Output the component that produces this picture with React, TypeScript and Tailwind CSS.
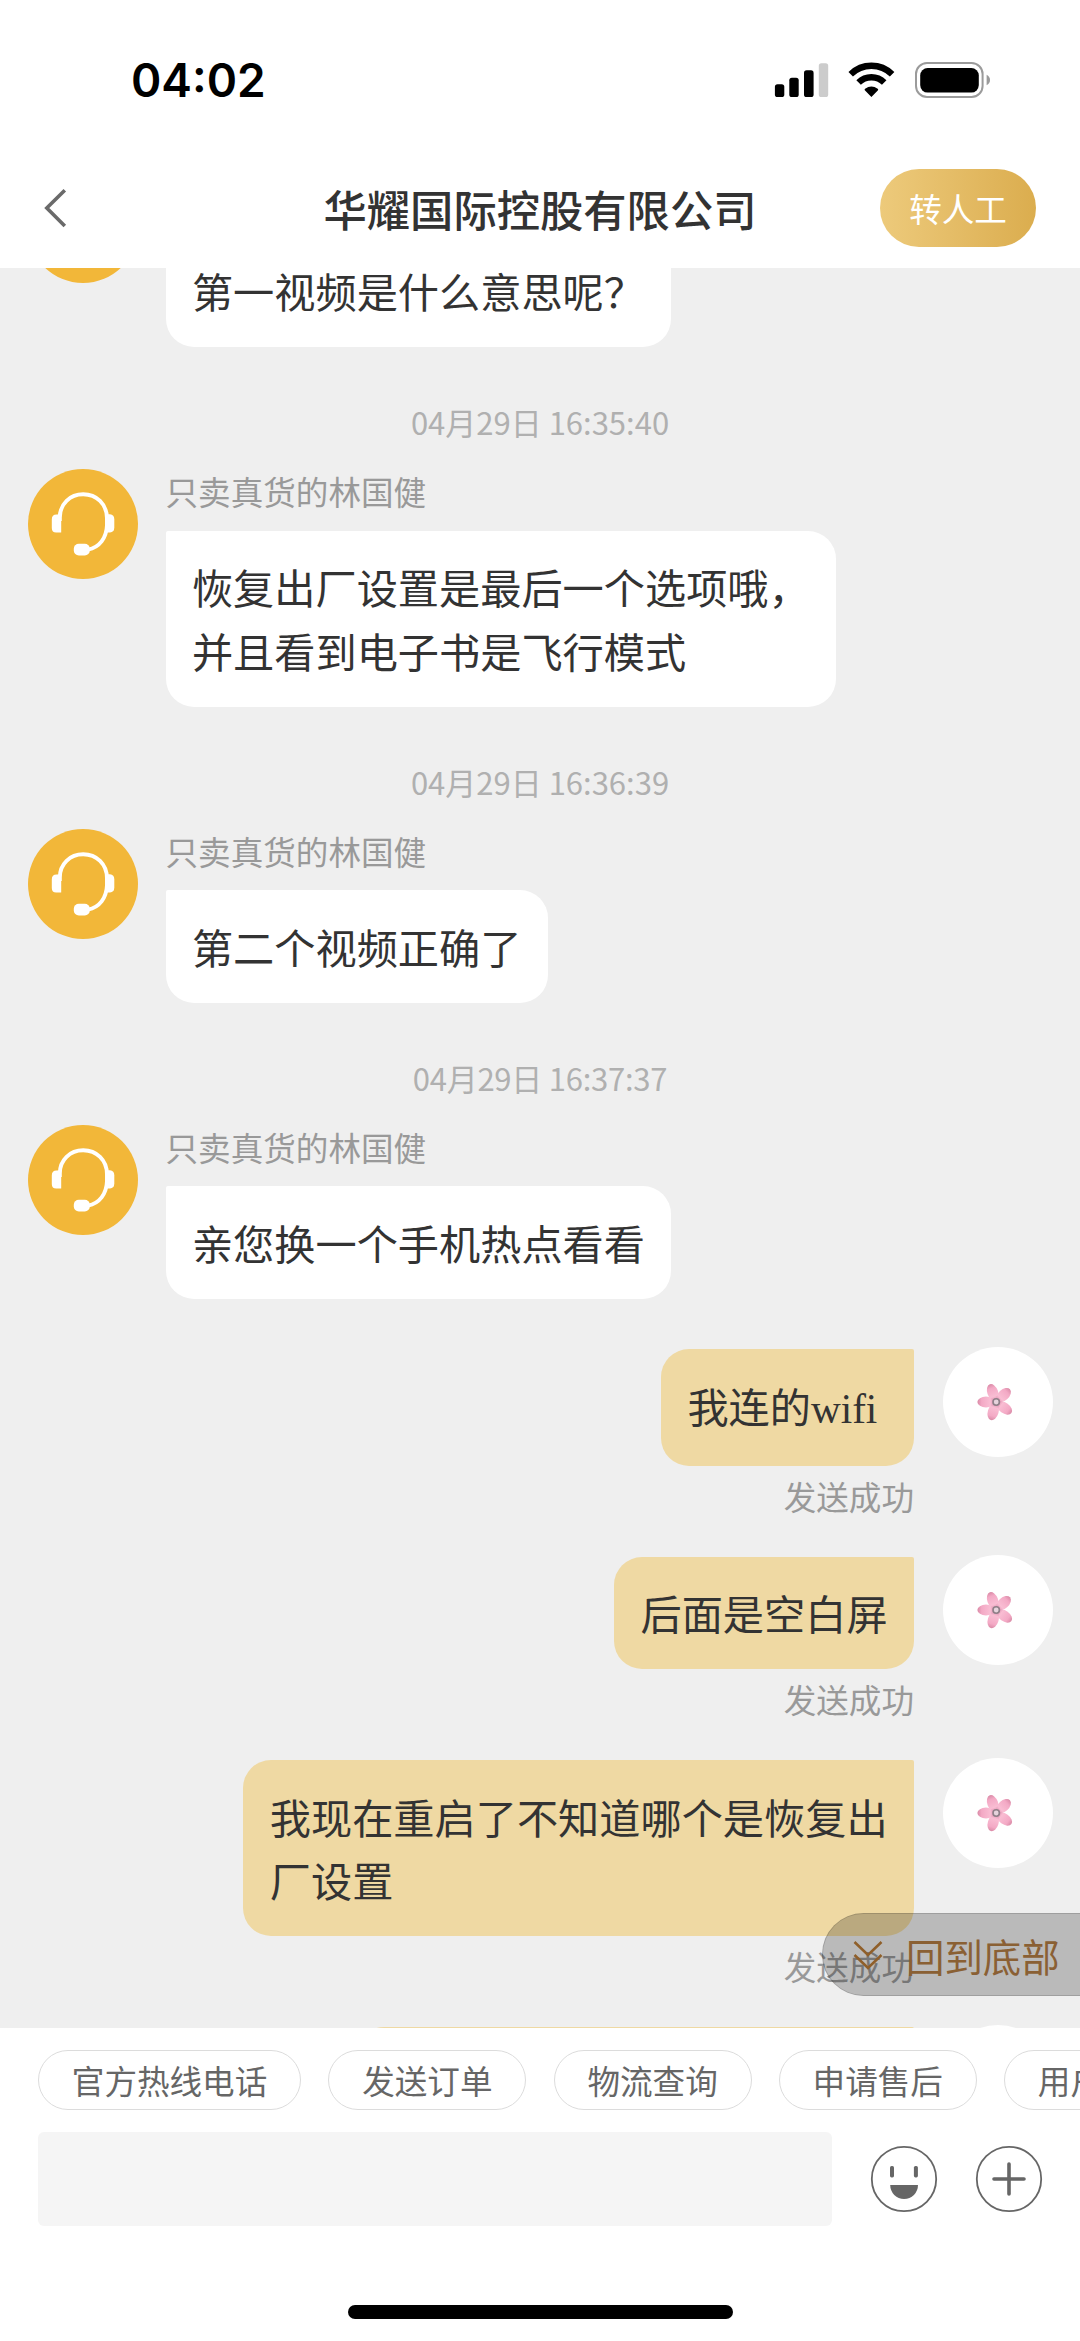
import type { ReactNode } from "react";

type AgentMessage = {
  time?: string;
  timeClass?: string;
  name: string;
  lines: string[];
};

type UserMessage = {
  content: ReactNode;
  bubbleClass?: string;
};

const AGENT_NAME = "只卖真货的林国健";

const agentMessages: AgentMessage[] = [
  { name: AGENT_NAME, lines: ["第一视频是什么意思呢？"] },
  { time: "04月29日 16:35:40", name: AGENT_NAME, lines: ["恢复出厂设置是最后一个选项哦，", "并且看到电子书是飞行模式"] },
  { time: "04月29日 16:36:39", name: AGENT_NAME, lines: ["第二个视频正确了"] },
  { time: "04月29日 16:37:37", timeClass: "tracking-[-0.25px]", name: AGENT_NAME, lines: ["亲您换一个手机热点看看"] },
];

const userMessages: UserMessage[] = [
  {
    content: (
      <>
        我连的<span className="font-['Liberation_Serif',serif]">wifi</span>
      </>
    ),
    bubbleClass: "w-[253px]",
  },
  { content: "后面是空白屏" },
  {
    content: (
      <>
        我现在重启了不知道哪个是恢复出
        <br />
        厂设置
      </>
    ),
  },
  { content: null, bubbleClass: "w-[558px]" },
];

const quickActions = ["官方热线电话", "发送订单", "物流查询", "申请售后", "用户反馈"];

function StatusBar() {
  return (
    <div className="flex h-[148px] items-start justify-between pl-[131px] pr-[89px] pt-[52px]">
      <div className="font-['Inter',sans-serif] text-[46px] font-semibold leading-[56px] text-black">04:02</div>
      <svg width="217" height="36" viewBox="0 0 217 36" className="mt-[10px]">
        <rect x="0.9" y="22.3" width="9.4" height="12.7" rx="2.6" />
        <rect x="15.3" y="15.7" width="9.4" height="19.3" rx="2.6" />
        <rect x="30" y="8.3" width="9.6" height="26.7" rx="2.6" />
        <rect x="44.8" y="1.2" width="9.4" height="33.8" rx="2.6" fill="#cccccc" />
        <g transform="translate(97.4 0)" fill="none" stroke="#000">
          <path d="M-20.7 12.3 A29.5 29.5 0 0 1 20.7 12.3" strokeWidth="6.4" />
          <path d="M-12.8 20.5 A18.2 18.2 0 0 1 12.8 20.5" strokeWidth="6.4" />
          <path d="M0 35 L-6.6 28.2 Q-7.2 27.4 -6.3 26.8 A11 11 0 0 1 6.3 26.8 Q7.2 27.4 6.6 28.2 Z" fill="#000" stroke="none" />
        </g>
        <rect x="142" y="1" width="66.6" height="34" rx="11" fill="none" stroke="#9b9b9b" strokeWidth="2" />
        <rect x="146.2" y="6" width="58.6" height="24.6" rx="7.5" />
        <path d="M212.6 12.8 Q216 14.5 216 18 Q216 21.5 212.6 23.2 Z" fill="#9b9b9b" />
      </svg>
    </div>
  );
}

function Header() {
  return (
    <div className="grid h-[120px] grid-cols-[200px_1fr_200px] items-center">
      <button type="button" className="pl-[43px]">
        <svg width="26" height="44" viewBox="0 0 26 44" fill="none" stroke="#6a6a6a" strokeWidth="3.6">
          <path d="M21.8 4.2 L3.8 22 L21.8 40" />
        </svg>
      </button>
      <div className="text-center text-[43.3px] font-medium leading-[60px] text-[#333333]">华耀国际控股有限公司</div>
      <button
        type="button"
        className="ml-auto mr-[44px] h-[78px] w-[156px] rounded-full bg-linear-to-r from-[#edca7b] to-[#dbad4e] text-[32.6px] leading-[78px] text-white"
      >
        转人工
      </button>
    </div>
  );
}

function AgentAvatar() {
  return (
    <svg width="110" height="110" viewBox="0 0 110 110" className="shrink-0">
      <circle cx="55" cy="55" r="55" fill="#f2b739" />
      <path
        d="M31.8 52 V48.5 C31.8 35 42 25.3 55.2 25.3 S79 35 79 49.5 V56 C78.5 69 71.5 78.5 60 80.6"
        fill="none"
        stroke="#fff"
        strokeWidth="3.9"
      />
      <path d="M33.2 45.3 V63.6 H28.2 Q23.8 63.6 23.8 59 V50.5 Q23.8 45.6 28.5 45.6 Z" fill="#fff" />
      <path d="M77.3 45.3 H82 Q86.3 45.6 86.3 50.5 V58.5 Q86.3 63.2 82 63.4 H77.3 Z" fill="#fff" />
      <rect x="45.8" y="74.8" width="16" height="11.6" rx="5" fill="#fff" />
    </svg>
  );
}

function FlowerAvatar() {
  return (
    <div className="size-[110px] shrink-0 rounded-full bg-white">
      <svg width="110" height="110" viewBox="0 0 110 110">
        <defs>
          <linearGradient id="petal" x1="0" y1="0" x2="0" y2="1">
            <stop offset="0" stopColor="#d98aa6" />
            <stop offset="0.25" stopColor="#f3a9c5" />
            <stop offset="0.75" stopColor="#f9bdd3" />
            <stop offset="1" stopColor="#dc8fae" />
          </linearGradient>
        </defs>
        <g transform="translate(53.2 55)" fill="url(#petal)">
          {[-20, 47, 126, 197, 270].map((deg) => (
            <ellipse key={deg} cx="0" cy="-10.2" rx="5.4" ry="8.6" transform={`rotate(${deg})`} />
          ))}
          <circle r="3.2" fill="#e6d3dc" stroke="#8f7f88" strokeWidth="1.6" />
        </g>
      </svg>
    </div>
  );
}

function AgentRow({ message }: { message: AgentMessage }) {
  return (
    <div>
      {message.time && (
        <div className="flex h-[122px] justify-center pt-[53px]">
          <div className={`h-[44px] text-[31px] leading-[44px] text-[#b0b0b0] ${message.timeClass ?? ""}`}>{message.time}</div>
        </div>
      )}
      <div className="flex items-start gap-[28px] pl-[27.5px]">
        <AgentAvatar />
        <div className="flex flex-col items-start">
          <div className="h-[61.5px] text-[32.6px] leading-[44px] text-[#999999]">{message.name}</div>
          <div className="rounded-[28px] rounded-tl-[2px] bg-white px-[26.4px] py-[24.5px] text-[41.2px] leading-[63.5px] text-[#333333]">
            {message.lines.map((line) => (
              <div key={line} className="whitespace-nowrap">
                {line}
              </div>
            ))}
          </div>
        </div>
      </div>
    </div>
  );
}

function UserRow({ message }: { message: UserMessage }) {
  return (
    <div className="flex items-start justify-end gap-[28.5px] pr-[27.5px]">
      <div className="flex flex-col items-end pt-[2px]">
        <div
          className={`min-h-[112.5px] whitespace-nowrap rounded-[28px] rounded-tr-[2px] bg-[#efd9a3] px-[26.4px] py-[24.5px] text-[41.2px] leading-[63.5px] text-[#333333] ${message.bubbleClass ?? ""}`}
        >
          {message.content}
        </div>
        <div className="h-[89px] pt-[8px] text-[32.6px] leading-[44px] text-[#999999]">发送成功</div>
      </div>
      <FlowerAvatar />
    </div>
  );
}

function BackToBottom() {
  return (
    <button
      type="button"
      className="absolute right-[-2px] top-[1645px] flex h-[83px] w-[260px] items-center rounded-l-full border border-black/15 bg-black/22 pl-[30px] text-[#8a6034]"
    >
      <svg width="30" height="32" viewBox="0 0 30 32" fill="none" stroke="#8f5f2a" strokeWidth="2.6">
        <path d="M1.5 3 L15 16 L28.5 3" />
        <path d="M1.5 16 L15 29 L28.5 16" />
      </svg>
      <span className="ml-[23px] whitespace-nowrap text-[38.4px] leading-[56px]">回到底部</span>
    </button>
  );
}

function Footer() {
  return (
    <div className="h-[313px] bg-white pt-[22px]">
      <div className="flex gap-[27.3px] overflow-hidden pl-[38px]">
        {quickActions.map((label) => (
          <button
            key={label}
            type="button"
            className="h-[60px] shrink-0 whitespace-nowrap rounded-full border border-[#dcdcdc] px-[32.8px] text-[32.6px] leading-[58px] text-[#666666]"
          >
            {label}
          </button>
        ))}
      </div>
      <div className="mt-[22px] flex items-center pl-[38px]">
        <div className="h-[94px] w-[794px] rounded-[6px] bg-[#f5f5f5]" />
        <svg width="68" height="68" viewBox="0 0 68 68" className="ml-[38px]">
          <circle cx="34" cy="34" r="32.2" fill="none" stroke="#666" strokeWidth="1.8" />
          <rect x="20" y="21" width="4" height="11.4" rx="1.6" fill="#666" />
          <rect x="43.9" y="21" width="4" height="11.4" rx="1.6" fill="#666" />
          <path d="M20.2 40 H48 A13.9 14 0 0 1 20.2 40 Z" fill="#666" />
        </svg>
        <svg width="68" height="68" viewBox="0 0 68 68" className="ml-[36.6px]">
          <circle cx="34" cy="34" r="32.2" fill="none" stroke="#666" strokeWidth="1.8" />
          <path d="M19 34 H49 M34 19 V49" stroke="#666" strokeWidth="3.6" strokeLinecap="round" />
        </svg>
      </div>
      <div className="mx-auto mt-[79px] h-[14px] w-[385px] rounded-full bg-black" />
    </div>
  );
}

export default function App() {
  return (
    <div className="flex h-[2341px] w-[1080px] flex-col overflow-hidden bg-white font-['Noto_Sans_CJK_SC',sans-serif]">
      <StatusBar />
      <Header />
      <div className="relative h-[1760px] overflow-hidden bg-[#efefef]">
        <div className="-mt-[95px]">
          {agentMessages.map((message, i) => (
            <AgentRow key={i} message={message} />
          ))}
          <div className="pt-[48.5px]">
            {userMessages.map((message, i) => (
              <UserRow key={i} message={message} />
            ))}
          </div>
        </div>
        <BackToBottom />
      </div>
      <Footer />
    </div>
  );
}
